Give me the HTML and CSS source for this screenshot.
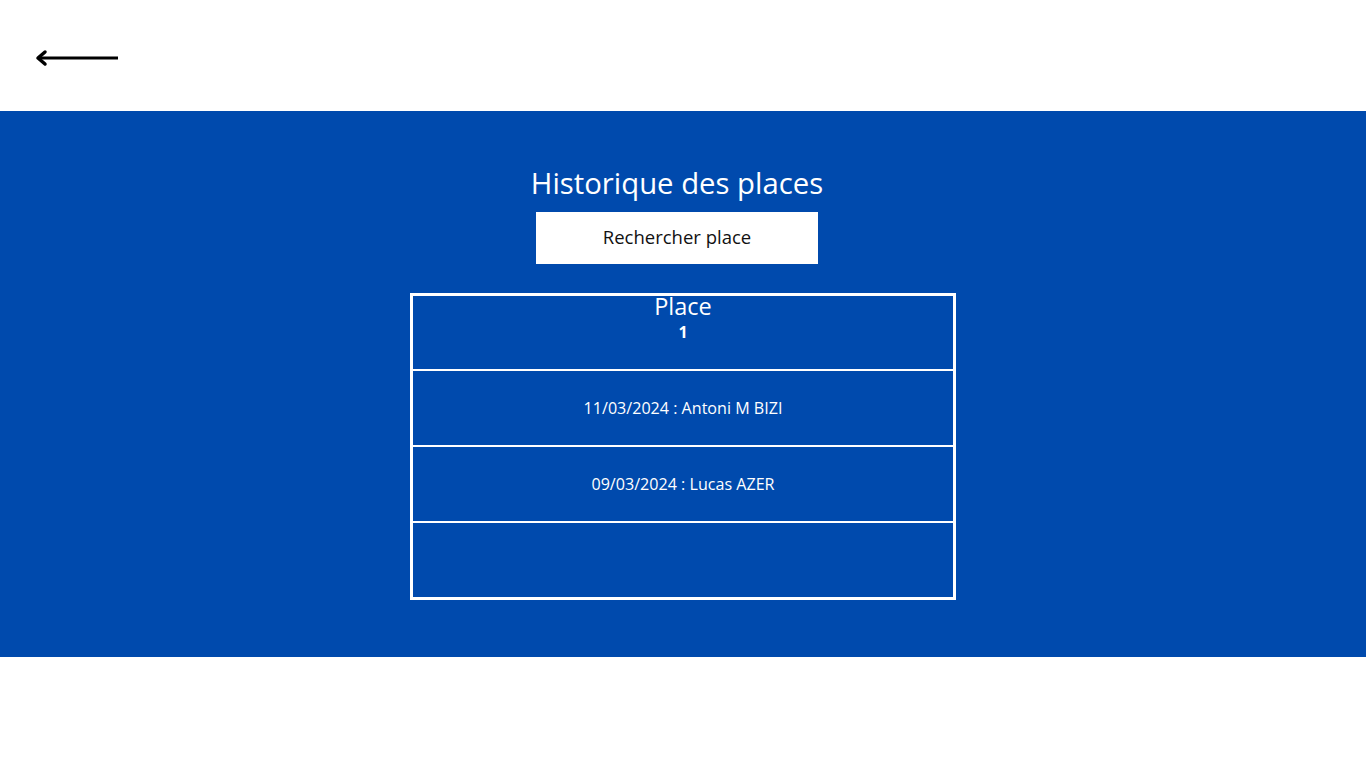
FILE: index.html
```html
<!DOCTYPE html>
<html>
<head>
    <title>Historique des places</title>
    <link rel="stylesheet" href="styles.css">
</head>
<body>
    <!-- barre du haut -->
    <div class="top-bar">
        <a class="back" href="#">
            <svg width="90" height="20" viewBox="0 0 90 20">
                <line x1="5" y1="10" x2="84" y2="10" stroke="#000" stroke-width="3"/>
                <polyline points="11,4 4,10 11,16" fill="none" stroke="#000" stroke-width="3.5" stroke-linecap="round" stroke-linejoin="round"/>
            </svg>
        </a>
    </div>

    <!-- zone bleue -->
    <div class="main">
        <div class="head">
            <h1 class="title">Historique des places</h1>
            <button class="search-btn">Rechercher place</button>
        </div>

        <div class="history">
            <div class="row row-head">
                <div class="place-label">Place</div>
                <div class="place-num">1</div>
            </div>
            <div class="row">11/03/2024 : Antoni M BIZI</div>
            <div class="row">09/03/2024 : Lucas AZER</div>
            <div class="row"></div>
        </div>
    </div>
</body>
</html>
```

FILE: styles.css
```css
body {
    margin: 0;
    padding: 0;
    background-color: #FFFFFF;
    font-family: "Open Sans", "Liberation Sans", sans-serif;
}

.top-bar {
    height: 111px;
    display: flex;
    align-items: flex-start;
}

.back {
    display: block;
    margin: 48px 0 0 34px;
    line-height: 0;
}

.main {
    height: 546px;
    background-color: #004AAD;
    display: flex;
    flex-direction: column;
    align-items: center;
    box-sizing: border-box;
    padding-top: 53px;
}

.head {
    display: flex;
    flex-direction: column;
    align-items: center;
    margin-right: 12px;
}

.title {
    margin: 0;
    font-size: 29.3px;
    font-weight: 400;
    line-height: 38px;
    color: #FFFFFF;
}

.search-btn {
    margin-top: 10px;
    width: 282px;
    height: 52px;
    padding: 0 0 4px;
    border: none;
    background-color: #FFFFFF;
    color: #111111;
    font-family: "Open Sans", "Liberation Sans", sans-serif;
    font-size: 18.5px;
    cursor: pointer;
}

.history {
    margin-top: 29px;
    width: 546px;
    box-sizing: border-box;
    border: 3px solid #FFFFFF;
}

.row {
    height: 74px;
    display: flex;
    align-items: center;
    justify-content: center;
    color: #FFFFFF;
    font-size: 16.1px;
    border-top: 2px solid #FFFFFF;
}

.row-head {
    height: 73px;
    border-top: none;
    flex-direction: column;
    justify-content: flex-start;
}

.place-label {
    font-size: 23.5px;
    line-height: 24px;
    margin-top: -2px;
}

.place-num {
    font-size: 16px;
    font-weight: 700;
    line-height: 18px;
    margin-top: 5px;
}
```
